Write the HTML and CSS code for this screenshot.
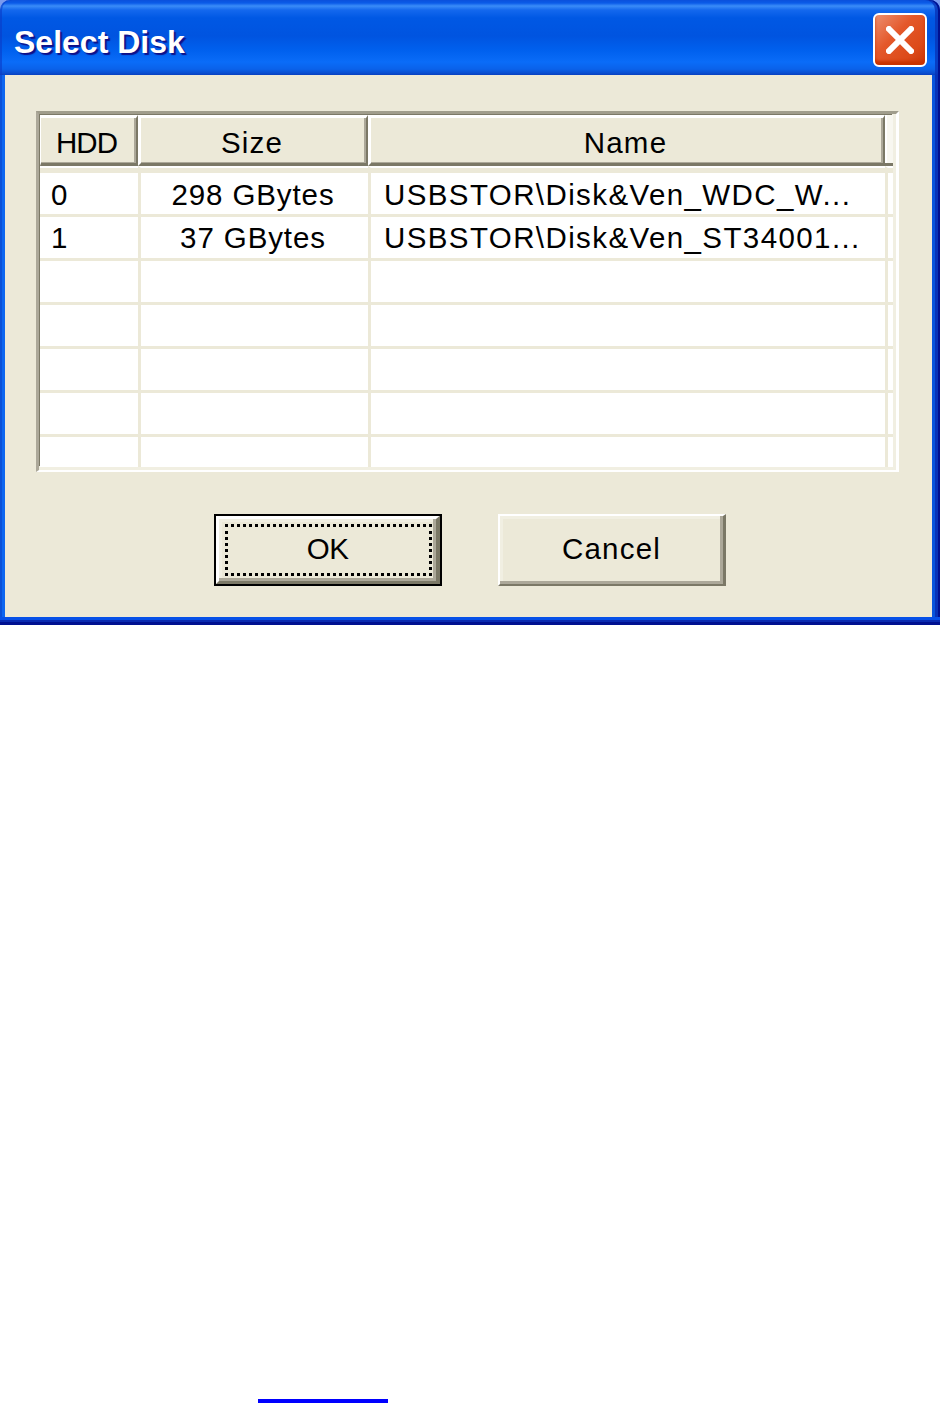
FILE: index.html
```html
<!DOCTYPE html>
<html lang="en">
<head>
  <meta charset="UTF-8">
  <meta name="viewport" content="width=device-width, initial-scale=1.0">
  <title>Select Disk</title>
  <link rel="stylesheet" href="styles.css">
</head>
<body>
  <div class="window">
    <!-- Title bar -->
    <div class="titlebar">
      <span class="title">Select Disk</span>
      <button class="close-btn" aria-label="Close">
        <svg width="28" height="28" viewBox="0 0 28 28">
          <path d="M3 3 L25 25 M25 3 L3 25" stroke="#fff" stroke-width="6" stroke-linecap="square"/>
        </svg>
      </button>
    </div>

    <!-- Dialog body -->
    <div class="frame">
      <div class="dialog">
        <div class="list">
          <table>
            <thead>
              <tr>
                <th class="col-hdd">HDD</th>
                <th class="col-size">Size</th>
                <th class="col-name">Name</th>
                <th class="col-rest"></th>
              </tr>
            </thead>
            <tbody>
              <tr>
                <td>0</td>
                <td class="center">298 GBytes</td>
                <td class="name">USBSTOR\Disk&amp;Ven_WDC_W...</td>
                <td></td>
              </tr>
              <tr>
                <td>1</td>
                <td class="center">37 GBytes</td>
                <td class="name">USBSTOR\Disk&amp;Ven_ST34001...</td>
                <td></td>
              </tr>
              <tr><td></td><td></td><td></td><td></td></tr>
              <tr><td></td><td></td><td></td><td></td></tr>
              <tr><td></td><td></td><td></td><td></td></tr>
              <tr><td></td><td></td><td></td><td></td></tr>
              <tr class="last-row"><td></td><td></td><td></td><td></td></tr>
            </tbody>
          </table>
        </div>

        <div class="buttons">
          <button class="btn btn-default"><span class="focus-ring">OK</span></button>
          <button class="btn btn-cancel"><span class="focus-ring">Cancel</span></button>
        </div>
      </div>
    </div>
  </div>

  <div class="footer">
    <div class="underline"></div>
  </div>
</body>
</html>
```

FILE: styles.css
```css
html, body {
  height: 100%;
}
body {
  margin: 0;
  padding: 0;
  background-color: #fff;
  color: #000;
  font-family: "Liberation Sans", Arial, sans-serif;
  font-size: 29.5px;
  display: flex;
  flex-direction: column;
  overflow: hidden;
}

/* Window frame */
.window {
  width: 940px;
  height: 625px;
  display: flex;
  flex-direction: column;
  background-color: #7a9aee;
}
.titlebar {
  height: 75px;
  flex: none;
  display: flex;
  align-items: flex-start;
  justify-content: space-between;
  padding: 13px 13px 0 14px;
  box-sizing: border-box;
  border-radius: 10px 10px 0 0;
  background: linear-gradient(to bottom,
    #0a50dc 0, #0a5be8 3px, #3a8cf8 6px, #1468ee 10px, #0058e4 18px,
    #0054e0 36px, #0060ee 50px, #0a6cf8 62px, #0a62ea 69px, #0a4fd0 73px, #0840c0 75px);
  box-shadow: inset 2px 0 0 rgba(10, 60, 200, .6), inset -2px 0 0 #001090, inset -5px 0 0 rgba(7, 51, 184, .8);
}
.title {
  color: #fff;
  font-size: 32px;
  font-weight: bold;
  line-height: 58px;
  text-shadow: 2px 2px 1px #0f1089;
}
.close-btn {
  width: 54px;
  height: 54px;
  padding: 0;
  border: 2px solid #fff;
  border-radius: 6px;
  display: flex;
  align-items: center;
  justify-content: center;
  background: linear-gradient(135deg, #ec8f70 0, #e4582a 40%, #dc4a18 75%, #c83408 100%);
  box-shadow: inset 0 -4px 3px #c93300;
}
.frame {
  flex: 1;
  display: flex;
  padding: 0 8px 8px 5px;
  background: linear-gradient(to right,
    #0a50d8 0, #0a50d8 2px, #0d66f0 2px, #0d66f0 5px,
    #0855dd 932px, #0855dd 935px, #0733b8 935px, #0733b8 938px, #001090 938px);
  box-shadow: inset 0 -3px 0 #001090, inset 0 -5px 0 #0a2ab0, inset 0 -8px 0 #0650e8;
}

/* Dialog area */
.dialog {
  flex: 1;
  padding: 36px 33px 0 31px;
  background-color: #ece9d8;
}

/* Disk list */
.list {
  height: 361px;
  box-sizing: border-box;
  padding: 1px 3px 0 1px;
  border-style: solid;
  border-width: 3px 3px 2px 3px;
  border-color: #a09d8c #fff #fff #aca899;
  background-color: #f1efe2;
}
table {
  width: 853px;
  table-layout: fixed;
  border-collapse: separate;
  border-spacing: 0;
  background-color: #fff;
  box-shadow: -1px -1px 0 #7b7866;
}
th {
  height: 51px;
  box-sizing: border-box;
  padding: 4px 3px 0 0;
  font-weight: normal;
  letter-spacing: 1.2px;
  background-color: #ece9d8;
  border-top: 3px solid #fff;
  border-left: 3px solid #fff;
  border-right: 2px solid #7b7866;
  border-bottom: 3px solid #7b7866;
  box-shadow: inset -2px -1px 0 #aca899;
}
th.col-hdd {
  width: 98px;
  padding-right: 4px;
  border-left-width: 1px;
  letter-spacing: -1px;
}
th.col-size {
  width: 230px;
}
th.col-name {
  width: 517px;
}
th.col-rest {
  padding: 0;
  border: none;
  border-bottom: 3px solid #7b7866;
  box-shadow: inset 2px 0 0 #fff;
  background-color: #f8f7f0;
}
td {
  height: 44px;
  box-sizing: border-box;
  padding: 1px 0 0 11px;
  border-left: 3px solid #ece9d8;
  border-bottom: 3px solid #ece9d8;
  white-space: nowrap;
  line-height: 38px;
  letter-spacing: 1.2px;
}
td:first-child {
  border-left: none;
}
tbody tr:first-child td {
  height: 51px;
  padding-top: 7px;
  border-top: 2px solid #fff;
  box-shadow: inset 0 5px 0 #ece9d8;
}
td:last-child {
  padding: 0;
}
td.center {
  text-align: center;
  padding: 1px 3px 0 0;
  letter-spacing: .9px;
}
td.name {
  padding-left: 13px;
  letter-spacing: 1.4px;
}
tbody tr:first-child td.center {
  padding: 7px 3px 0 0;
}
.last-row td {
  height: 30px;
  border-bottom: none;
}

/* Buttons */
.buttons {
  margin-top: 42px;
  display: flex;
  justify-content: center;
  gap: 56px;
  margin-left: 5px;
}
.btn {
  width: 228px;
  height: 72px;
  box-sizing: border-box;
  padding: 0;
  font-family: inherit;
  font-size: inherit;
  color: #000;
  background-color: #ece9d8;
  border-style: solid;
  border-color: #fff #7b7866 #7b7866 #fff;
}
.btn-cancel {
  border-width: 2px 3px 2px 2px;
  box-shadow: inset -3px -3px 0 #aca899, inset 3px 3px 0 #f1efe2;
  letter-spacing: 1.2px;
}
.btn-default {
  border-width: 5px 6px 5px 5px;
  outline: 2px solid #000;
  outline-offset: -2px;
  box-shadow: inset -3px -3px 0 #aca899, inset 3px 3px 0 #f1efe2;
  letter-spacing: -.5px;
}
.focus-ring {
  display: flex;
  align-items: center;
  justify-content: center;
  height: 100%;
  padding-bottom: 2px;
  box-sizing: border-box;
}
.btn-default .focus-ring {
  margin: 0 4px 0 6px;
  height: 52px;
  padding: 0 2px 3px 0;
  border: 3px dotted #000;
}

/* Stray line at the bottom of the page */
.footer {
  flex: 1;
  display: flex;
  align-items: flex-end;
  padding-left: 258px;
}
.underline {
  width: 130px;
  height: 4px;
  background-color: #00f;
}
```
